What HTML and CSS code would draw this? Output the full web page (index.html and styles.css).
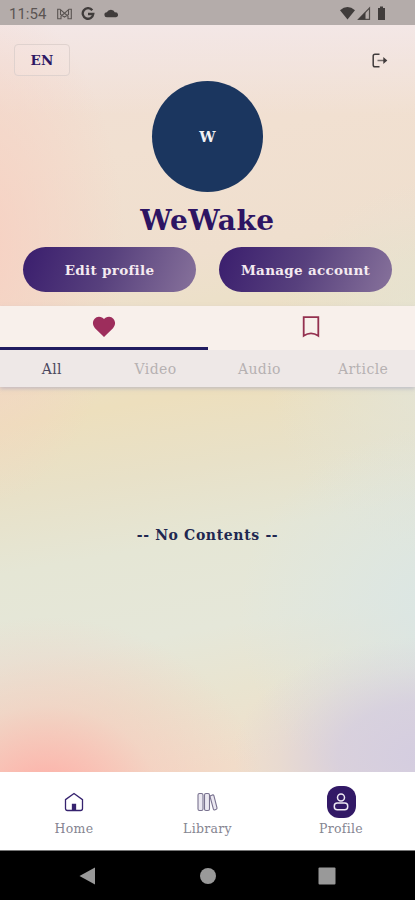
FILE: index.html
```html
<!DOCTYPE html>
<html lang="en">
<head>
<meta charset="utf-8">
<title>WeWake profile</title>
<link rel="stylesheet" href="styles.css">
</head>
<body>
<div class="phone">
  <header class="status">
    <span class="clock">11:54</span>
    <svg class="mail" width="15" height="12" viewBox="0 0 15 12" fill="none" stroke="#595351" stroke-width="1.1"><path d="M.7 1.2H3l4.500 4 4.500-4h2.300v9.600H11V8L7.500 5.200 4 8v2.800H.7zM3.500 1.500v5L7.500 9l4-2.500v-5"/></svg>
    <svg class="google" width="14" height="14" viewBox="0 0 14 14" fill="none" stroke="#403c3b" stroke-width="2.300"><path d="M11.300 3.300A5.300 5.300 0 1 0 12.300 7H7"/></svg>
    <svg class="cloud" width="15" height="9" viewBox="0 0 15 9" fill="#403c3b"><path d="M3 8.300a2.500 2.500 0 0 1-.2-5A4.500 4.500 0 0 1 11 3.400 2.500 2.500 0 0 1 12 8.300z"/></svg>
    <svg class="signals" width="48" height="15" viewBox="0 0 48 15" fill="#403c3b"><path d="M0 4.200Q7.500 -2 15 4.200L7.500 13.500z"/><path d="M18.500 13.300 29.500 2v11.300z" fill="none" stroke="#514c4a" stroke-width="1.200"/><path d="M18 13.500 25.500 6v7.500z"/><path d="M39 2h2V.5h3V2h2v12h-7z" transform="translate(-1 0)"/></svg>
  </header>

  <main class="screen">
    <section class="profile">
      <div class="toolbar">
        <button class="language">EN</button>
        <svg class="logout" width="16" height="15" viewBox="0 0 16 15" fill="none" stroke="#403b3b" stroke-width="1.500"><path d="M7.500 1.200H3Q1.200 1.200 1.200 3v9q0 1.800 1.800 1.800h4.500"/><path d="M5.500 7.500H12" stroke="#766e6c"/><path d="M11.300 4v7l4-3.500z" fill="#403b3b" stroke="none"/></svg>
      </div>
      <div class="avatar">W</div>
      <h1>WeWake</h1>
      <div class="actions">
        <button>Edit profile</button>
        <button>Manage account</button>
      </div>
    </section>

    <div class="panel">
      <div class="tabs">
        <div class="tab selected"><svg width="24" height="22" viewBox="0 0 24 22"><path d="M12 21 3 12.200C-2.500 6 4-2.500 10.500 1.800L12 3l1.500-1.200C20-2.500 26.500 6 21 12.200z" fill="#9d2d5c"/></svg></div>
        <div class="tab"><svg width="18" height="22" viewBox="0 0 18 22"><path d="M1.700 1.200h14.600v18.600Q9 14.800 1.700 19.800z" fill="none" stroke="#94304f" stroke-width="1.800"/></svg></div>
      </div>
      <div class="filters"><span class="current">All</span><span>Video</span><span>Audio</span><span>Article</span></div>
    </div>

    <section class="contents"><p>-- No Contents --</p></section>
  </main>

  <nav class="bottom">
    <a class="home"><i><svg width="20" height="20" viewBox="0 0 20 20" fill="none" stroke="#36236f" stroke-width="1.300"><path d="M1.500 7.600 10 1.500l8.500 6.100v8.900q0 2-2 2h-13q-2 0-2-2z"/><path d="M8.500 18v-5.500h3V18z" fill="#36236f"/></svg></i>Home</a>
    <a class="library"><i><svg width="21" height="20" viewBox="0 0 21 20" fill="#ebe8f1" stroke="#79728f" stroke-width="1.100"><rect x="1" y="1.500" width="5" height="17" rx="1.500"/><rect x="7.500" y="1.500" width="5" height="17" rx="1.500"/><path d="m13.500 3.700 2-.8q1-.3 1.400.7l3.100 12.200q.2 1-.8 1.500l-1.500.6q-1 .2-1.300-.8l-3.200-12q-.2-1 .3-1.400z"/></svg></i>Library</a>
    <a class="account"><i><svg width="16" height="20" viewBox="0 0 16 20" fill="none" stroke="#eee9f4" stroke-width="1.500"><circle cx="8" cy="5.500" r="3.500"/><rect x="1.300" y="11" width="13.400" height="6.800" rx="3"/></svg></i>Profile</a>
  </nav>

  <footer class="system">
    <svg width="18" height="20" viewBox="0 0 18 20"><path d="M.5 10 16 1.500v17z" fill="#999"/></svg>
    <svg width="18" height="18" viewBox="0 0 18 18"><circle cx="9" cy="9" r="8" fill="#999"/></svg>
    <svg width="18" height="18" viewBox="0 0 18 18"><rect x=".5" y=".5" width="17" height="17" rx="1" fill="#999"/></svg>
  </footer>
</div>
</body>
</html>
```
FILE: styles.css
```css
* { box-sizing: border-box; }
body { margin: 0; font-family: "DejaVu Serif", serif; }
button { font-family: inherit; cursor: pointer; }
svg { display: block; flex: none; }

.phone { width: 415px; height: 900px; display: flex; flex-direction: column; overflow: hidden; }

.status { height: 25px; flex: none; background: #b4acaa; display: flex; align-items: center; padding: 2px 27px 0 9px; }
.clock { width: 38px; font: 15px/20px Roboto, sans-serif; color: #5b5553; }
.mail { margin-left: 10px; }
.google { margin-left: 9px; }
.cloud { margin-left: 9px; }
.signals { margin-left: auto; }

.screen {
  height: 747px;
  flex: none;
  display: flex;
  flex-direction: column;
  background:
    radial-gradient(ellipse 220px 185px at 11% 104%, #ffaaa3 0%, #fdb4abcc 22%, #f9c5b977 52%, #f9c5b900 100%),
    radial-gradient(ellipse 190px 120px at 102% 98%, #d4cde0 0%, #d4cde0cc 45%, #d4cde044 76%, #d4cde000 100%),
    radial-gradient(ellipse 150px 260px at -6% 30%, #f7d0c2 0%, #f7d0c288 45%, #f7d0c200 100%),
    linear-gradient(180deg, #f3e7e6 0%, #f3e7e600 12%),
    radial-gradient(ellipse 210px 190px at 108% 79%, #dae6e5 0%, #dae6e500 100%),
    radial-gradient(ellipse 170px 190px at 106% 46%, #e3e4d6 0%, #e3e4d600 100%),
    linear-gradient(170deg, #f1dfd4 5%, #f1e0d1 18%, #efdfce 32%, #ece0c9 38%, #eddfbd 49%, #e8e1c8 58%, #e5e6d5 67%, #e5e7d9 78%, #e9e4d0 86%, #f0dfcb 95%);
}

.profile { height: 281px; flex: none; display: flex; flex-direction: column; align-items: center; }
.toolbar { width: 100%; height: 56px; display: flex; justify-content: space-between; align-items: flex-start; padding: 19px 27px 0 14px; }
.language { width: 56px; height: 32px; padding: 0; border: 1px solid #dfd2ce; border-radius: 4px; background: #f6e9e540; color: #2d1763; font-size: 13.500px; font-weight: bold; letter-spacing: .3px; }
.logout { margin-top: 9px; }
.avatar { width: 111px; height: 111px; border-radius: 50%; background: #1b365f; color: #f2f2f4; display: flex; align-items: center; justify-content: center; font-size: 14.500px; font-weight: bold; }
h1 { margin: 10px 0 0; height: 37px; font-size: 28px; line-height: 37px; letter-spacing: .5px; color: #2d1463; }
.actions { display: flex; gap: 23px; margin-top: 8px; }
.actions button { width: 173px; height: 45px; padding: 0; border: 0; border-radius: 23px; background: linear-gradient(110deg, #3d216f 5%, #57407d 48%, #87729b 100%); color: #f4eaf0; font-size: 13.500px; font-weight: bold; letter-spacing: .3px; white-space: nowrap; }

.panel { height: 81px; flex: none; box-shadow: 0 2px 4px #a2a4c088; }
.tabs { height: 44px; display: flex; background: #f8f0eb; }
.tab { flex: 1; display: flex; justify-content: center; padding-top: 10px; }
.tab.selected { background: linear-gradient(#211c60, #211c60) left bottom / 100% 3px no-repeat; }
.filters { height: 37px; display: grid; grid-template-columns: repeat(4, 1fr); background: #eee8e7; color: #b6b1b2; font-size: 14px; line-height: 39px; letter-spacing: .4px; text-align: center; }
.current { color: #4b475e; }

.contents { flex: 1; display: flex; justify-content: center; }
.contents p { margin: 137px 0 0; height: 22px; font-size: 14px; line-height: 22px; font-weight: bold; letter-spacing: .65px; color: #202750; white-space: nowrap; }

.bottom { height: 78px; flex: none; display: flex; justify-content: center; background: #fff; }
.bottom a { width: 133.500px; display: flex; flex-direction: column; align-items: center; padding-top: 14px; font-size: 12.500px; line-height: 20px; letter-spacing: .3px; color: #858591; }
.bottom i { width: 29px; height: 32px; margin-bottom: 1px; display: flex; align-items: center; justify-content: center; }
.account i { border-radius: 12px; background: #321966; }

.system { height: 50px; flex: none; display: flex; justify-content: space-between; align-items: center; padding: 0 79px; background: #000; border-top: 1px solid #777; }
```
